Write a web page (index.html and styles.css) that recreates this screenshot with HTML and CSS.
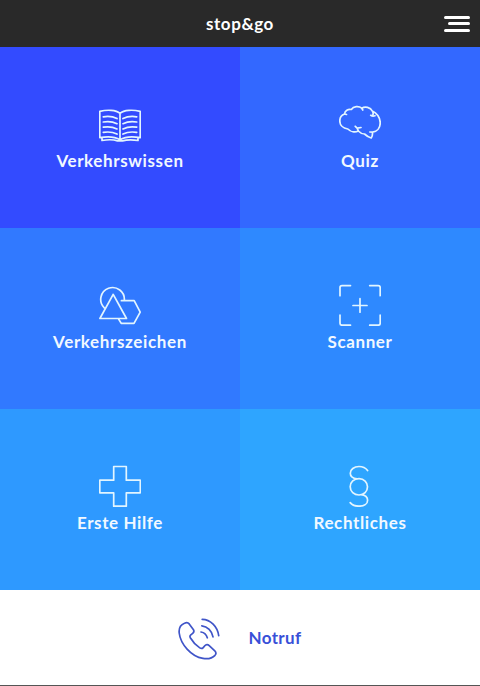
FILE: index.html
```html
<!DOCTYPE html>
<html lang="de">
<head>
<meta charset="utf-8">
<title>stop&amp;go</title>
<link rel="stylesheet" href="styles.css">
</head>
<body>
<div class="app">
  <header class="header">
    <h1 class="title">stop&amp;go</h1>
    <button class="menu" aria-label="Menü"><span class="bar"></span><span class="bar bar-short"></span><span class="bar"></span></button>
  </header>
  <main class="grid">
    <a class="tile tile-knowledge">
      <svg class="icon" viewBox="9 8 42 42"><path d="M30 18.3C26 14.7 17 14.6 9.8 16.3V42.7C17 41.3 25 41.7 30 44.7C35 41.7 43 41.3 50.2 42.7V16.3C43 14.6 34 14.7 30 18.3V44.7M12 43v2.5c7-1.2 12-.8 15.500 .4h5c4-1.200 9-1.600 15.500-.4V43M13.300 21.800c5-.9 9.500-.4 13.700 1.700M13.300 27c5-.9 9.500-.4 13.700 1.700M13.300 32.200c5-.9 9.500-.4 13.700 1.700M13.300 37.400c5-.9 9.500-.4 13.700 1.700M46.700 21.800c-5-.9-9.500-.4-13.700 1.700M46.700 27c-5-.9-9.500-.4-13.700 1.700M46.700 32.200c-5-.9-9.500-.4-13.700 1.700M46.700 37.400c-5-.9-9.500-.4-13.700 1.700"/></svg>
      <span class="label">Verkehrswissen</span>
    </a>
    <a class="tile tile-quiz">
      <svg class="icon" viewBox="9 8 42 42"><path d="M16.500 19.500L14.500 19C15 15.500 18 13.800 21.300 14.500C23.500 11 29 10.800 31.700 13.200C35 11.200 40.500 12 42.300 16C46.500 17.800 50.300 22.500 50.200 28C50.200 33 47 36.500 42.500 37.200C42.700 39.500 42.200 41.500 41.200 43C38.500 42.200 36.500 40.800 34.500 39C32 39 30 37.800 28.300 36C25 37.500 20.500 36.800 17.800 34C13 33.300 9.800 30 9.800 26C9.800 22.500 11.500 20 14.500 19M31.700 13.200L32.800 15M42.300 16C43.500 17.800 43.400 19.300 42.500 20.700M40.700 20.300C42 21.200 43.500 21.300 45 20.700M28.300 36C27.900 34 26.900 32.500 25.200 31.300M27.500 33.200L31 32.500M42.500 37.200L39.800 37"/></svg>
      <span class="label">Quiz</span>
    </a>
    <a class="tile tile-signs">
      <svg class="icon" viewBox="9 9 42 42"><path d="M14.300 32.800A11.800 11.800 0 1 1 34.300 25.500M23.200 19.300 9.900 43.500H36.500ZM31.400 25.700H44.200L50.200 37.200 44 48.300H31.200L28.300 43.600"/></svg>
      <span class="label">Verkehrszeichen</span>
    </a>
    <a class="tile tile-scanner">
      <svg class="icon" viewBox="9 9 42 42"><path d="M10 20.700V12.500Q10 10.600 12 10.600H20.500M39.700 10.600H48.200Q50.200 10.600 50.200 12.500V20.700M50.200 40V48.200Q50.200 50.200 48.200 50.200H39.700M20.500 50.200H12Q10 50.200 10 48.200V40M30 23.700V37.200M23 30.500H37"/></svg>
      <span class="label">Scanner</span>
    </a>
    <a class="tile tile-aid">
      <svg class="icon" viewBox="9 10 42 42"><path d="M23.700 11.500H36.300V25.200H50.300V37.800H36.300V51.200H23.700V37.800H9.800V25.200H23.700Z"/></svg>
      <span class="label">Erste Hilfe</span>
    </a>
    <a class="tile tile-legal">
      <svg class="icon" viewBox="9 10 42 42"><path d="M37.600 15.500C35.500 12.700 32.300 11.500 29 11.500C24 11.500 20.300 14.500 20.300 18.200C20.300 21.500 23 23.300 27 23.900M37.500 31.800C37.500 36.500 34 40 29 40S20.200 36.500 20.200 31.800S24 23.700 29 23.700S37.500 27.300 37.500 31.800ZM31 39.700C35 40.200 37.600 42.300 37.600 45.200C37.600 48.900 34 51.200 29 51.200C25.500 51.200 22.300 50.200 20.200 47.600"/></svg>
      <span class="label">Rechtliches</span>
    </a>
  </main>
  <footer class="emergency">
    <svg class="phone" viewBox="13 13 42 42"><path d="M19.500 18.200C16 19.500 13.700 23 14.200 28C15.500 39 26 51.500 38 53.400C43.500 54.200 47.500 53 50 50.300C51.300 48.800 51.200 47.300 49.800 45.900L44.200 40.600C42.800 39.300 41 39.400 39.800 40.800L38.200 42.600C37.300 43.600 36 43.700 34.800 42.900C31 40.400 27.700 36.800 25.300 32.700C24.700 31.600 24.900 30.700 25.800 29.900L27.700 28.300C29 27.200 29.200 25.800 28.300 24.500L24.200 18.900C23 17.400 21.500 17.300 19.500 18.200ZM37.200 14.400C45.500 14.600 52.500 21.500 53.700 30.700M36.800 20.800C42.500 21.400 47 26 48 31.800M36 27C39.300 27.500 41.500 29.800 42.300 32.800"/></svg>
    <span class="emergency-label">Notruf</span>
  </footer>
</div>
</body>
</html>
```

FILE: styles.css
```css
* { box-sizing: border-box; }

body {
  margin: 0;
  font-family: Lato, "Liberation Sans", sans-serif;
  font-weight: 700;
}

.app {
  height: 686px;
  display: grid;
  grid-template-rows: 47px 543px 96px;
}

.header {
  display: grid;
  grid-template-columns: 1fr auto 1fr;
  align-items: center;
  padding: 0 10px;
  background: #292929;
  color: #fff;
}

.title {
  grid-column: 2;
  margin: 1px 0 0;
  font-size: 17px;
  line-height: 20px;
  letter-spacing: 0.55px;
}

.menu {
  justify-self: end;
  display: flex;
  flex-direction: column;
  align-items: flex-end;
  gap: 3.5px;
  padding: 0;
  border: 0;
  background: none;
}

.bar {
  width: 26px;
  height: 3px;
  border-radius: 1.5px;
  background: #fff;
}

.bar-short { width: 22px; }

.grid {
  display: grid;
  grid-template-columns: 1fr 1fr;
  grid-template-rows: repeat(3, 1fr);
}

.tile {
  display: flex;
  flex-direction: column;
  align-items: center;
  padding-top: 56px;
  color: #f1f8ff;
}

.tile-knowledge { background: #334bff; }
.tile-quiz { background: #3368ff; }
.tile-signs { background: #3179ff; }
.tile-scanner { background: #2e89ff; }
.tile-aid { background: #2e99ff; }
.tile-legal { background: #2ea5ff; }

.icon, .phone {
  width: 42px;
  height: 42px;
  fill: none;
  stroke: #e2f5ff;
  stroke-width: 1.7;
  stroke-linecap: round;
  stroke-linejoin: round;
}

.label {
  margin-top: 5px;
  font-size: 17px;
  line-height: 22px;
  letter-spacing: 0.62px;
}

.emergency {
  display: flex;
  align-items: center;
  justify-content: center;
  gap: 28px;
  padding-top: 2px;
  background: #fff;
  border-bottom: 1px solid #555;
}

.phone { stroke: #4055c8; }

.emergency-label {
  margin-bottom: 2px;
  color: #3850d8;
  font-size: 17px;
  line-height: 22px;
  letter-spacing: 0.4px;
}
```
